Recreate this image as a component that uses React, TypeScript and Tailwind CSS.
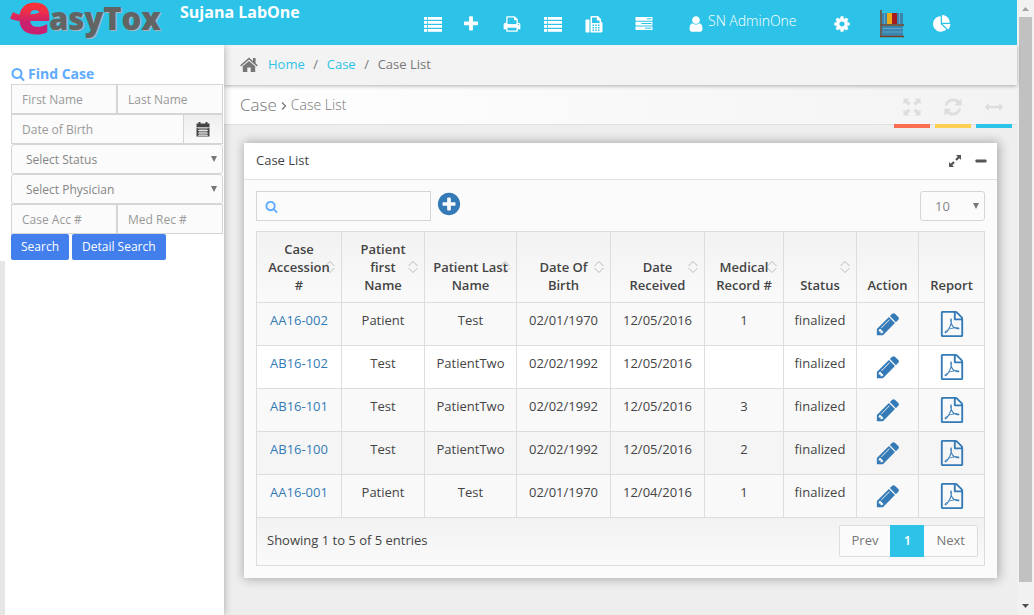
import type { ReactNode } from "react";

const PATHS = {
  pencil:
    "M491 1536l91-91-235-235-91 91v107h128v128h107zm523-928q0-22-22-22-10 0-17 7l-542 542q-7 7-7 17 0 22 22 22 10 0 17-7l542-542q7-7 7-17zm-54-192l416 416-832 832h-416v-416zm683 96q0 53-37 90l-166 166-416-416 166-165q36-38 90-38 53 0 91 38l235 234q37 39 37 91z",
  pdf: "M1596 380q28 28 48 76t20 88v1152q0 40-28 68t-68 28h-1344q-40 0-68-28t-28-68v-1600q0-40 28-68t68-28h896q40 0 88 20t76 48zm-444-244v376h376q-10-29-22-41l-313-313q-12-12-41-22zm384 1528v-1024h-416q-40 0-68-28t-28-68v-416h-768v1536h1280zm-514-593q33 26 84 56 59-7 117-7 147 0 177 49 16 22 2 52 0 1-1 2l-2 2v1q-6 38-71 38-48 0-115-20t-130-53q-221 24-392 83-153 262-242 262-15 0-28-7l-24-12q-1-1-6-5-10-10-6-36 9-40 56-91.500t132-96.500q14-9 23 6 2 2 2 4 52-85 107-197 68-136 104-262-24-82-30.500-159.500t6.500-127.500q11-40 42-40h22q23 0 35 15 18 21 9 68-2 6-4 8 1 3 1 8v30q-2 123-14 192 55 164 146 238zm-576 411q52-24 137-158-51 40-87.500 84t-49.500 74zm398-920q-15 42-2 132 1-7 7-44 0-3 7-43 1-4 4-8-1-1-1-2-1-2-1-3-1-22-13-36 0 1-1 2v2zm-124 661q135-54 284-81-2-1-13-9.500t-16-13.500q-76-67-127-176-27 86-83 197-30 56-45 83zm646-16q-24-24-140-24 76 28 124 28 14 0 18-1 0-1-2-3z",
  plusCircle:
    "M1344 960v-128q0-26-19-45t-45-19h-256v-256q0-26-19-45t-45-19h-128q-26 0-45 19t-19 45v256h-256q-26 0-45 19t-19 45v128q0 26 19 45t45 19h256v256q0 26 19 45t45 19h128q26 0 45-19t19-45v-256h256q26 0 45-19t19-45zm320-64q0 209-103 385.500t-279.500 279.500-385.500 103-385.500-103-279.500-279.500-103-385.500 103-385.500 279.500-279.500 385.500-103 385.500 103 279.500 279.500 103 385.500z",
  search:
    "M1216 832q0-185-131.500-316.500t-316.500-131.500-316.500 131.500-131.500 316.500 131.500 316.500 316.500 131.500 316.500-131.500 131.500-316.500zm512 832q0 52-38 90t-90 38q-54 0-90-38l-343-342q-179 124-399 124-143 0-273.500-55.500t-225-150-150-225-55.500-273.500 55.500-273.500 150-225 225-150 273.500-55.500 273.500 55.500 225 150 150 225 55.500 273.500q0 220-124 399l343 343q37 37 37 90z",
  plus: "M1600 736v192q0 40-28 68t-68 28h-416v416q0 40-28 68t-68 28h-192q-40 0-68-28t-28-68v-416h-416q-40 0-68-28t-28-68v-192q0-40 28-68t68-28h416v-416q0-40 28-68t68-28h192q40 0 68 28t28 68v416h416q40 0 68 28t28 68z",
  print:
    "M448 1536h896v-256h-896v256zm0-640h896v-384h-160q-40 0-68-28t-28-68v-160h-640v640zm1152 64q0-26-19-45t-45-19-45 19-19 45 19 45 45 19 45-19 19-45zm128 0v416q0 13-9.500 22.500t-22.500 9.500h-224v160q0 40-28 68t-68 28h-960q-40 0-68-28t-28-68v-160h-224q-13 0-22.500-9.500t-9.500-22.500v-416q0-79 56.500-135.500t135.500-56.500h64v-544q0-40 28-68t68-28h672q40 0 88 20t76 48l152 152q28 28 48 76t20 88v256h64q79 0 135.500 56.500t56.500 135.500z",
  user: "M1536 1399q0 109-62.500 187t-150.500 78h-854q-88 0-150.500-78t-62.500-187q0-85 8.500-160.500t31.500-152 58.500-131 94-89 134.500-34.500q131 128 313 128t313-128q76 0 134.500 34.500t94 89 58.500 131 31.500 152 8.500 160.500zm-256-887q0 159-112.500 271.500t-271.500 112.500-271.500-112.500-112.500-271.500 112.500-271.500 271.500-112.500 271.500 112.500 112.500 271.500z",
  cog: "M1152 896q0-106-75-181t-181-75-181 75-75 181 75 181 181 75 181-75 75-181zm512-109v222q0 12-8 23t-20 13l-185 28q-19 54-39 91 35 50 107 138 10 12 10 25t-9 23q-27 37-99 108t-94 71q-12 0-26-9l-138-108q-44 23-91 38-16 136-29 186-7 28-36 28h-222q-14 0-24.500-8.500t-11.500-21.500l-28-184q-49-16-90-37l-141 107q-10 9-25 9-14 0-25-11-126-114-165-168-7-10-7-23 0-12 8-23 15-21 51-66.500t54-70.500q-27-50-41-99l-183-27q-13-2-21-12.500t-8-23.500v-222q0-12 8-23t19-13l186-28q14-46 39-92-40-57-107-138-10-12-10-24 0-10 9-23 26-36 98.500-107.500t94.500-71.500q13 0 26 10l138 107q44-23 91-38 16-136 29-186 7-28 36-28h222q14 0 24.500 8.500t11.500 21.500l28 184q49 16 90 37l142-107q9-9 24-9 13 0 25 10 129 119 165 170 7 8 7 22 0 12-8 23-15 21-51 66.500t-54 70.500q26 50 41 98l183 28q13 2 21 12.500t8 23.500z",
  pie: "M768 890l546 546q-106 108-247.500 168t-298.500 60q-209 0-385.500-103t-279.500-279.500-103-385.500 103-385.500 279.500-279.500 385.500-103v762zm187 6h773q0 157-60 298.500t-168 247.500zm709-128h-768v-768q209 0 385.500 103t279.500 279.500 103 385.500z",
  refresh:
    "M1639 1056q0 5-1 7-64 268-268 434.500t-478 166.500q-146 0-282.500-55t-243.500-157l-129 129q-19 19-45 19t-45-19-19-45v-448q0-26 19-45t45-19h448q26 0 45 19t19 45-19 45l-137 137q71 66 161 102t187 36q134 0 250-65t186-179q11-17 53-117 8-23 30-23h192q13 0 22.500 9.500t9.500 22.500zm25-800v448q0 26-19 45t-45 19h-448q-26 0-45-19t-19-45 19-45l138-138q-148-137-349-137-134 0-250 65t-186 179q-11 17-53 117-8 23-30 23h-199q-13 0-22.500-9.500t-9.500-22.500v-7q65-268 270-434.500t480-166.500q146 0 284 55.500t245 156.500l130-129q19-19 45-19t45 19 19 45z",
  arrowsH:
    "M1792 896q0 26-19 45l-256 256q-19 19-45 19t-45-19-19-45v-128h-1024v128q0 26-19 45t-45 19-45-19l-256-256q-19-19-19-45t19-45l256-256q19-19 45-19t45 19 19 45v128h1024v-128q0-26 19-45t45-19 45 19l256 256q19 19 19 45z",
};

function Icon({ name, className }: { name: keyof typeof PATHS; className: string }) {
  return (
    <svg viewBox="0 0 1792 1792" fill="currentColor" aria-hidden="true" className={className}>
      <path d={PATHS[name]} />
    </svg>
  );
}

function ListIcon() {
  return (
    <svg viewBox="0 0 18 18" fill="currentColor" aria-hidden="true" className="size-[18px]">
      {[2, 6, 10, 14].map((y) => (
        <g key={y}>
          <rect x="0" y={y} width="3.200" height="2.800" />
          <rect x="4" y={y} width="14" height="2.800" />
        </g>
      ))}
    </svg>
  );
}

function FaxIcon() {
  return (
    <svg viewBox="0 0 18 18" fill="currentColor" aria-hidden="true" className="size-[18px]">
      <rect x="0.500" y="4.500" width="4" height="13" rx="1" />
      <path
        fillRule="evenodd"
        d="M5.500 2Q5.500 1 6.500 1H13L16 4V6.500Q17.500 7 17.500 8.500V16Q17.500 17.500 16 17.500H5.500ZM7 2.500V8H14.500V5.500H11.800V2.500ZM7.500 9.500V11H9V9.500ZM10.200 9.500V11H11.700V9.500ZM13 9.500V11H14.500V9.500ZM7.500 12V13.500H9V12ZM10.200 12V13.500H11.700V12ZM13 12V13.500H14.500V12ZM7.500 14.500V16H9V14.500ZM10.200 14.500V16H11.700V14.500ZM13 14.500V16H14.500V14.500Z"
      />
    </svg>
  );
}

function TasksIcon() {
  return (
    <svg viewBox="0 0 18 18" aria-hidden="true" className="size-[18px]">
      <g fill="#fff">
        <rect x="0.500" y="2" width="17" height="3.700" rx="0.400" />
        <rect x="0.500" y="6.700" width="17" height="3.700" rx="0.400" />
        <rect x="0.500" y="11.400" width="17" height="3.700" rx="0.400" />
      </g>
      <g fill="#2dc3e8">
        <rect x="12" y="3.300" width="4.500" height="1" />
        <rect x="6.500" y="8" width="10" height="1" />
        <rect x="10" y="12.700" width="6.500" height="1" />
      </g>
    </svg>
  );
}

function ShelfIcon() {
  return (
    <svg viewBox="0 0 26 28" aria-hidden="true" className="h-7 w-[26px]">
      <rect x="3" y="3" width="5" height="11" fill="#3b86b0" />
      <rect x="5" y="3" width="1" height="11" fill="#66a9cb" />
      <rect x="8" y="3" width="5" height="11" fill="#e9ad1c" />
      <rect x="13" y="3" width="5" height="11" fill="#a81c20" />
      <rect x="18" y="3" width="6" height="11" fill="#3b86b0" />
      <rect x="20" y="3" width="1" height="11" fill="#66a9cb" />
      <rect x="3" y="16" width="21" height="10" fill="#3b86b0" />
      <path d="M4 18.500H24M4 22H24" stroke="#5fa6cc" strokeWidth="1" />
      <path d="M2 0V27M2 15H25M1 26.500H25" stroke="#7c3c1d" strokeWidth="1.400" />
    </svg>
  );
}

function FullscreenIcon() {
  return (
    <svg viewBox="0 0 18 18" fill="currentColor" aria-hidden="true" className="size-[18px]">
      {[0, 90, 180, 270].map((a) => (
        <path key={a} transform={`rotate(${a} 9 9)`} d="M0.500 0.500H6.500L4.700 2.300L7.600 5.200L5.200 7.600L2.300 4.700L0.500 6.500Z" />
      ))}
    </svg>
  );
}

function HomeIcon() {
  return (
    <svg viewBox="0 0 18 16" fill="currentColor" aria-hidden="true" className="h-4 w-[18px]">
      <path d="M9 0.500L0.200 8.300L1.200 9.400L9 2.600L16.800 9.400L17.800 8.300L15.600 6.300V1H13V4Z" />
      <path d="M9 3.900L2.800 9.300V15H7.300V10.500H10.700V15H15.200V9.300Z" />
    </svg>
  );
}

function CalendarIcon() {
  return (
    <svg viewBox="0 0 14 15" aria-hidden="true" className="h-[15px] w-3.5">
      <path fill="#444" d="M0.500 1.500H2.500V0H4.500V1.500H9.500V0H11.500V1.500H13.500V5H0.500ZM0.500 5.500H13.500V14.500H0.500Z" />
      <path stroke="#e8e8e8" strokeWidth="0.900" d="M1.500 6H12.500M2 8.500H12M2 11H12M2 13.300H12M4 7V13.500M6 7V13.500M8 7V13.500M10 7V13.500" />
    </svg>
  );
}

function SortIcon() {
  return (
    <svg
      viewBox="0 0 10 13"
      fill="none"
      stroke="#bbb"
      strokeWidth="1"
      aria-hidden="true"
      className="absolute top-1/2 right-1.5 h-[13px] w-2.5 -translate-y-1/2"
    >
      <path d="M0.500 5.500L5 1L9.500 5.500M0.500 7.500L5 12L9.500 7.500" />
    </svg>
  );
}

function Logo() {
  return (
    <svg viewBox="0 0 160 45" role="img" aria-label="easyTox" className="h-[45px] w-40 shrink-0 overflow-visible">
      <defs>
        <linearGradient id="logo-e" x1="0" y1="0" x2="0" y2="45" gradientUnits="userSpaceOnUse">
          <stop offset="0.050" stopColor="#fb3434" />
          <stop offset="0.250" stopColor="#ee2f47" />
          <stop offset="0.500" stopColor="#c9216f" />
        </linearGradient>
      </defs>
      <path d="M13 12Q20 16.500 30 15L42 12L40 19Q30 22.500 22 21Q14 20.500 10 18.500Z" fill="url(#logo-e)" />
      <text x="17" y="34" fontFamily="Open Sans" fontWeight="800" fontSize="56" fill="url(#logo-e)">
        e
      </text>
      <g fontFamily="Open Sans" fontWeight="800" fontSize="31">
        <text x="50" y="31" fill="#a9b4b8">
          asyTox
        </text>
        <text x="49" y="30" fill="#636363">
          asyTox
        </text>
      </g>
    </svg>
  );
}

function NavButton({ label, className = "", children }: { label: string; className?: string; children: ReactNode }) {
  return (
    <button type="button" aria-label={label} className={`shrink-0 ${className}`}>
      {children}
    </button>
  );
}

const fieldClass =
  "h-[30px] min-w-0 border border-[#d5d5d5] bg-[#fbfbfb] px-2.5 text-xs text-[#777] outline-none placeholder:text-[#999]";

function FilterSelect({ label }: { label: string }) {
  return (
    <div className="relative">
      <select
        aria-label={label}
        className="block h-[30px] w-full appearance-none rounded-[3px] border border-[#d5d5d5] bg-[#fbfbfb] pt-0.5 pr-6 pl-3.5 text-xs text-[#858585]"
      >
        <option>{label}</option>
      </select>
      <DownArrow />
    </div>
  );
}

function DownArrow() {
  return (
    <svg
      viewBox="0 0 6 6"
      aria-hidden="true"
      className="pointer-events-none absolute top-3 right-1.5 size-1.5 fill-[#777]"
    >
      <path d="M0 0H6L3 6Z" />
    </svg>
  );
}

function Sidebar() {
  return (
    <aside className="z-10 flex w-56 shrink-0 flex-col shadow-[0_0_8px_rgba(0,0,0,0.3)]">
      <form className="bg-white pt-[19px] pr-px pb-px pl-[11px]">
        <h2 className="flex h-5 items-center gap-[3px] pb-px text-sm font-bold text-[#5eabff]">
          <Icon name="search" className="size-3.5" />
          Find Case
        </h2>
        <div className="flex">
          <input aria-label="First Name" placeholder="First Name" className={`${fieldClass} flex-1`} />
          <input aria-label="Last Name" placeholder="Last Name" className={`${fieldClass} flex-1`} />
        </div>
        <div className="flex">
          <input aria-label="Date of Birth" placeholder="Date of Birth" className={`${fieldClass} flex-1`} />
          <button
            type="button"
            aria-label="Pick date"
            className="flex h-[30px] w-[39px] items-center justify-center border border-l-0 border-[#d5d5d5] bg-linear-to-b from-[#eee] to-[#fbfbfb]"
          >
            <CalendarIcon />
          </button>
        </div>
        <FilterSelect label="Select Status" />
        <FilterSelect label="Select Physician" />
        <div className="flex">
          <input aria-label="Case Acc #" placeholder="Case Acc #" className={`${fieldClass} flex-1`} />
          <input aria-label="Med Rec #" placeholder="Med Rec #" className={`${fieldClass} flex-1`} />
        </div>
        <div className="flex gap-[3px] text-xs text-white">
          <button type="submit" className="h-[26px] rounded-[2px] bg-[#427fed] px-2.5">
            Search
          </button>
          <button type="button" className="h-[26px] rounded-[2px] bg-[#427fed] px-2.5">
            Detail Search
          </button>
        </div>
      </form>
      <div className="flex-1 border-l-[5px] border-[#e6e6e6] bg-white" />
    </aside>
  );
}

const columns = [
  { title: "Case Accession #", width: "w-[85px]", sortable: true },
  { title: "Patient first Name", width: "w-[83px]", sortable: true },
  { title: "Patient Last Name", width: "w-[92px]", sortable: true },
  { title: "Date Of Birth", width: "w-[94px]", sortable: true },
  { title: "Date Received", width: "w-[94px]", sortable: true },
  { title: "Medical Record #", width: "w-[79px]", sortable: true },
  { title: "Status", width: "w-[73px]", sortable: true },
  { title: "Action", width: "w-[62px]", sortable: false },
  { title: "Report", width: "w-[66px]", sortable: false },
];

const cases = [
  ["AA16-002", "Patient", "Test", "02/01/1970", "12/05/2016", "1", "finalized"],
  ["AB16-102", "Test", "PatientTwo", "02/02/1992", "12/05/2016", "", "finalized"],
  ["AB16-101", "Test", "PatientTwo", "02/02/1992", "12/05/2016", "3", "finalized"],
  ["AB16-100", "Test", "PatientTwo", "02/02/1992", "12/05/2016", "2", "finalized"],
  ["AA16-001", "Patient", "Test", "02/01/1970", "12/04/2016", "1", "finalized"],
];

const highlightedCase = "AB16-100";

function rowColor(id: string) {
  return id === highlightedCase ? "bg-[#f5f5f5]" : "odd:bg-[#f9f9f9] even:bg-white";
}

function CaseTable() {
  return (
    <table className="w-full table-fixed border-collapse text-center">
      <thead>
        <tr className="bg-linear-to-b from-[#f2f2f2] to-[#fafafa]">
          {columns.map((c) => (
            <th
              key={c.title}
              className={`${c.width} relative border border-[#ddd] px-2 py-2 align-bottom leading-[18px] font-semibold text-[#444]`}
            >
              {c.sortable && <SortIcon />}
              <span className="relative">{c.title}</span>
            </th>
          ))}
        </tr>
      </thead>
      <tbody>
        {cases.map((row) => (
          <tr key={row[0]} className={`h-[43px] ${rowColor(row[0])}`}>
            {row.map((value, i) => (
              <td key={columns[i].title} className="border border-[#ddd] pt-2 align-top leading-[18px]">
                {i === 0 ? (
                  <a href="#case" className="text-[#337ab7]">
                    {value}
                  </a>
                ) : (
                  value
                )}
              </td>
            ))}
            <td className="border border-[#ddd] text-[#337ab7]">
              <button type="button" aria-label={`Edit ${row[0]}`} className="block w-full">
                <Icon name="pencil" className="mx-auto size-[26px]" />
              </button>
            </td>
            <td className="border border-[#ddd] text-[#337ab7]">
              <button type="button" aria-label={`Report ${row[0]}`} className="block w-full">
                <Icon name="pdf" className="mx-auto size-[26px]" />
              </button>
            </td>
          </tr>
        ))}
      </tbody>
    </table>
  );
}

function CaseCard() {
  return (
    <section className="bg-[#fbfbfb] shadow-[1px_0_10px_1px_rgba(0,0,0,0.3)]">
      <header className="flex h-[37px] items-center justify-between border-b border-[#e2e2e2] bg-white pr-2.5 pl-3">
        <h3 className="text-[13px] text-[#444]">Case List</h3>
        <div className="flex items-center gap-3.5 text-[#555]">
          <button type="button" aria-label="Maximize">
            <svg viewBox="0 0 12 12" fill="currentColor" aria-hidden="true" className="size-3">
              <path d="M7 0H12V5L10.300 3.300L7.800 5.800L6.200 4.200L8.700 1.700ZM0 7L1.700 8.700L4.200 6.200L5.800 7.800L3.300 10.300L5 12H0Z" />
            </svg>
          </button>
          <button type="button" aria-label="Collapse">
            <svg viewBox="0 0 12 12" fill="currentColor" aria-hidden="true" className="size-3">
              <rect x="0.500" y="4.500" width="11" height="3" rx="0.800" />
            </svg>
          </button>
        </div>
      </header>
      <div className="p-3 pt-[11px]">
        <div className="mb-2.5 flex items-start">
          <label className="flex h-[30px] w-[175px] items-center border border-[#d5d5d5] bg-[#fbfbfb] pl-2 text-[#5eabff]">
            <Icon name="search" className="size-[13px] shrink-0" />
            <input aria-label="Search cases" className="min-w-0 flex-1 bg-transparent px-2 text-[#444] outline-none" />
          </label>
          <button type="button" aria-label="Add case" className="ml-[5px] text-[#337ab7]">
            <Icon name="plusCircle" className="size-[26px]" />
          </button>
          <div className="relative ml-auto w-[65px]">
            <select
              aria-label="Rows per page"
              className="block h-[30px] w-full appearance-none rounded-[3px] border border-[#d5d5d5] bg-[#fbfbfb] pt-0.5 pl-3.5 text-[13px] text-[#858585]"
            >
              <option>10</option>
            </select>
            <DownArrow />
          </div>
        </div>
        <CaseTable />
        <footer className="flex min-h-12 items-start justify-between border border-t-0 border-[#ddd] bg-linear-to-b from-[#f2f2f2] to-[#fafafa] pt-[7px] pr-1.5 pl-2.5">
          <p className="py-1.5 leading-[18px]">Showing 1 to 5 of 5 entries</p>
          <nav aria-label="Pages" className="flex text-[#777]">
            <a href="#prev" className="flex h-8 items-center rounded-l-[2px] border border-r-0 border-[#ddd] bg-[#fbfbfb] px-3">
              Prev
            </a>
            <a href="#page-1" className="flex h-8 w-[34px] items-center justify-center bg-[#2dc3e8] font-semibold text-white">
              1
            </a>
            <a href="#next" className="flex h-8 items-center rounded-r-[2px] border border-l-0 border-[#ddd] bg-[#fbfbfb] px-3">
              Next
            </a>
          </nav>
        </footer>
      </div>
    </section>
  );
}

function ScrollTrack() {
  return (
    <div aria-hidden="true" className="flex w-[17px] shrink-0 flex-col items-center bg-[#f1f1f1]">
      <svg viewBox="0 0 17 17" className="size-[17px] fill-[#a3a3a3]">
        <path d="M5 11H12L8.500 7Z" />
      </svg>
      <div className="w-[13px] flex-1 bg-[#c1c1c1]" />
      <svg viewBox="0 0 17 33" className="h-[33px] w-[17px] fill-[#505050]">
        <path d="M5 22H12L8.500 26Z" />
      </svg>
    </div>
  );
}

export default function App() {
  return (
    <div className="flex min-h-screen bg-[#eee] font-['Open_Sans',sans-serif] text-[13px] text-[#444]">
      <div className="flex min-w-0 flex-1 flex-col">
        <header className="z-20 flex h-[45px] shrink-0 items-start bg-[#2dc3e8] text-white">
          <Logo />
          <h1 className="w-[264px] shrink-0 pl-5 text-base leading-6 font-bold">Sujana LabOne</h1>
          <nav aria-label="Main" className="flex h-12 items-center">
            <NavButton label="Case list">
              <ListIcon />
            </NavButton>
            <NavButton label="New case" className="ml-5">
              <Icon name="plus" className="size-[18px]" />
            </NavButton>
            <NavButton label="Print" className="ml-[23px]">
              <Icon name="print" className="size-[18px]" />
            </NavButton>
            <NavButton label="Orders" className="ml-[23px]">
              <ListIcon />
            </NavButton>
            <NavButton label="Fax" className="ml-[23px]">
              <FaxIcon />
            </NavButton>
            <NavButton label="Tasks" className="ml-8">
              <TasksIcon />
            </NavButton>
            <button type="button" className="ml-[34px] flex shrink-0 items-center gap-[3px]">
              <Icon name="user" className="size-[18px]" />
              <span className="pb-1.5 text-sm leading-5 font-light">SN AdminOne</span>
            </button>
            <NavButton label="Settings" className="ml-9">
              <Icon name="cog" className="size-[18px]" />
            </NavButton>
            <NavButton label="Library" className="ml-7">
              <ShelfIcon />
            </NavButton>
            <NavButton label="Charts" className="ml-7">
              <Icon name="pie" className="size-[18px]" />
            </NavButton>
          </nav>
        </header>
        <div className="flex flex-1">
          <Sidebar />
          <main className="min-w-0 flex-1">
            <nav
              aria-label="Breadcrumb"
              className="relative flex h-10 items-center bg-[#f3f3f3] pl-4 text-[#777] shadow-[0_1px_4px_rgba(0,0,0,0.3)]"
            >
              <HomeIcon />
              <a href="#home" className="ml-2.5 text-[#2dc3e8]">
                Home
              </a>
              <span className="w-[22px] text-center">/</span>
              <a href="#cases" className="text-[#2dc3e8]">
                Case
              </a>
              <span className="w-[22px] text-center">/</span>
              <span>Case List</span>
            </nav>
            <div className="mb-[3px] flex h-10 items-center border-b border-[#e0e0e0] bg-linear-to-r from-white to-[#f3f3f3] pr-[5px] pl-4 text-[#777]">
              <h2 className="text-[17px] font-light">Case</h2>
              <svg viewBox="0 0 6 8" fill="none" stroke="#777" strokeWidth="1.300" aria-hidden="true" className="mx-1 mt-0.5 h-2 w-1.5">
                <path d="M1 0.500L4.500 4L1 7.500" />
              </svg>
              <small className="text-sm font-light">Case List</small>
              <div className="ml-auto flex items-start gap-[5px] self-start text-[#ddd]">
                <button type="button" aria-label="Full screen" className="flex h-[43px] w-9 items-center justify-center border-b-4 border-[#fb6e52] pt-1">
                  <FullscreenIcon />
                </button>
                <button type="button" aria-label="Refresh" className="flex h-[43px] w-9 items-center justify-center border-b-4 border-[#ffce55] pt-1">
                  <Icon name="refresh" className="size-5" />
                </button>
                <button type="button" aria-label="Toggle sidebar" className="flex h-[43px] w-9 items-center justify-center border-b-4 border-[#2dc3e8] pt-1">
                  <Icon name="arrowsH" className="size-[18px]" />
                </button>
              </div>
            </div>
            <div className="px-5 pt-[15px] pb-9">
              <CaseCard />
            </div>
          </main>
        </div>
      </div>
      <ScrollTrack />
    </div>
  );
}
